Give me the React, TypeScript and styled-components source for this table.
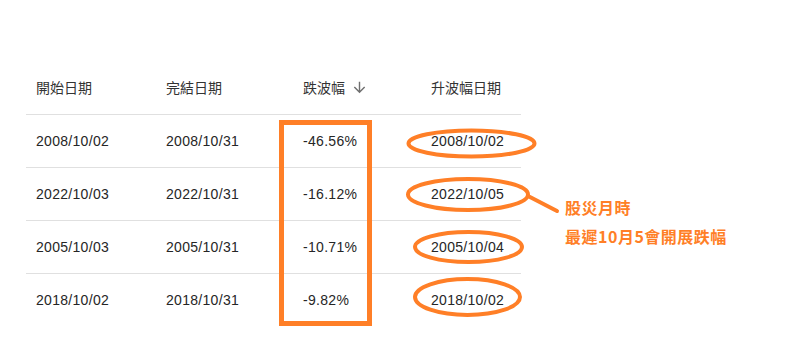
import React from 'react'
import styled, { createGlobalStyle } from 'styled-components'

const rows = [
  { start: '2008/10/02', end: '2008/10/31', drop: '-46.56%', rise: '2008/10/02' },
  { start: '2022/10/03', end: '2022/10/31', drop: '-16.12%', rise: '2022/10/05' },
  { start: '2005/10/03', end: '2005/10/31', drop: '-10.71%', rise: '2005/10/04' },
  { start: '2018/10/02', end: '2018/10/31', drop: '-9.82%', rise: '2018/10/02' },
]

const columns = [
  { label: '開始日期', width: 130 },
  { label: '完結日期', width: 137 },
  { label: '跌波幅', width: 128, sorted: true },
  { label: '升波幅日期', width: 100 },
]

const ORANGE = '#ff7f27'

const App = () => {
  return (
    <>
      <GlobalStyle />
      <Canvas>
        <Table>
          <colgroup>
            {columns.map(c => <col key={c.label} style={{ width: c.width }} />)}
          </colgroup>
          <thead>
            <tr>
              {columns.map(c => (
                <HeadCell key={c.label}>
                  <HeadLabel>
                    {c.label}
                    {c.sorted && (
                      <SortIcon viewBox="0 0 24 24">
                        <path d="M20 12l-1.41-1.41L13 16.17V4h-2v12.17l-5.58-5.59L4 12l8 8 8-8z" />
                      </SortIcon>
                    )}
                  </HeadLabel>
                </HeadCell>
              ))}
            </tr>
          </thead>
          <tbody>
            {rows.map((r, i) => (
              <tr key={r.start}>
                <Cell last={i === rows.length - 1}>{r.start}</Cell>
                <Cell last={i === rows.length - 1}>{r.end}</Cell>
                <Cell last={i === rows.length - 1}>{r.drop}</Cell>
                <Cell last={i === rows.length - 1}>{r.rise}</Cell>
              </tr>
            ))}
          </tbody>
        </Table>

        {/* hand-drawn highlights over the table */}
        <Marks viewBox="0 0 802 339">
          <rect x="281.5" y="122.5" width="88" height="201" />
          <ellipse cx="471.5" cy="143.5" rx="63" ry="13" />
          <ellipse cx="468" cy="194.5" rx="60" ry="15.5" />
          <ellipse cx="468.5" cy="247" rx="53.5" ry="15" />
          <ellipse cx="467.5" cy="297" rx="52.5" ry="18" />
          <line x1="528" y1="196" x2="557" y2="211" />
        </Marks>

        <Note>
          股災月時
          <br />
          最遲10月5會開展跌幅
        </Note>
      </Canvas>
    </>
  )
}
export default App

const GlobalStyle = createGlobalStyle`
  html, body {
    margin: 0;
    padding: 0;
    background: #fff;
  }
  body {
    font-family: "Liberation Sans", "Noto Sans CJK TC", Arial, sans-serif;
  }
`

const Canvas = styled.div`
  position: relative;
  width: 802px;
  height: 339px;
  padding: 61px 0 0 26px;
  box-sizing: border-box;
  overflow: hidden;
`

const Table = styled.table`
  border-collapse: collapse;
  table-layout: fixed;
  width: 495px;
`

const HeadCell = styled.th`
  height: 53px;
  padding: 0 0 0 10px;
  text-align: left;
  font-weight: 400;
  font-size: 14px;
  color: #333;
  border-bottom: 1px solid #e0e0e0;
  box-sizing: border-box;
`

const HeadLabel = styled.span`
  display: inline-flex;
  align-items: center;
`

const SortIcon = styled.svg`
  width: 17px;
  height: 17px;
  margin-left: 6px;
  fill: #6f6f6f;
`

const Cell = styled.td<{ last?: boolean }>`
  height: 53px;
  padding: 0 0 0 10px;
  font-size: 14px;
  letter-spacing: 0.3px;
  color: #262626;
  border-bottom: 1px solid ${p => (p.last ? 'transparent' : '#e0e0e0')};
  box-sizing: border-box;
`

const Marks = styled.svg`
  position: absolute;
  left: 0;
  top: 0;
  width: 802px;
  height: 339px;
  fill: none;
  stroke: ${ORANGE};
  stroke-width: 4;
  stroke-linecap: round;

  rect {
    stroke-width: 5;
  }
`

const Note = styled.div`
  position: absolute;
  left: 565px;
  top: 193px;
  font-family: "Noto Sans CJK TC", "Liberation Sans", sans-serif;
  font-size: 16px;
  font-weight: 700;
  line-height: 29px;
  letter-spacing: 0.5px;
  color: ${ORANGE};
`
